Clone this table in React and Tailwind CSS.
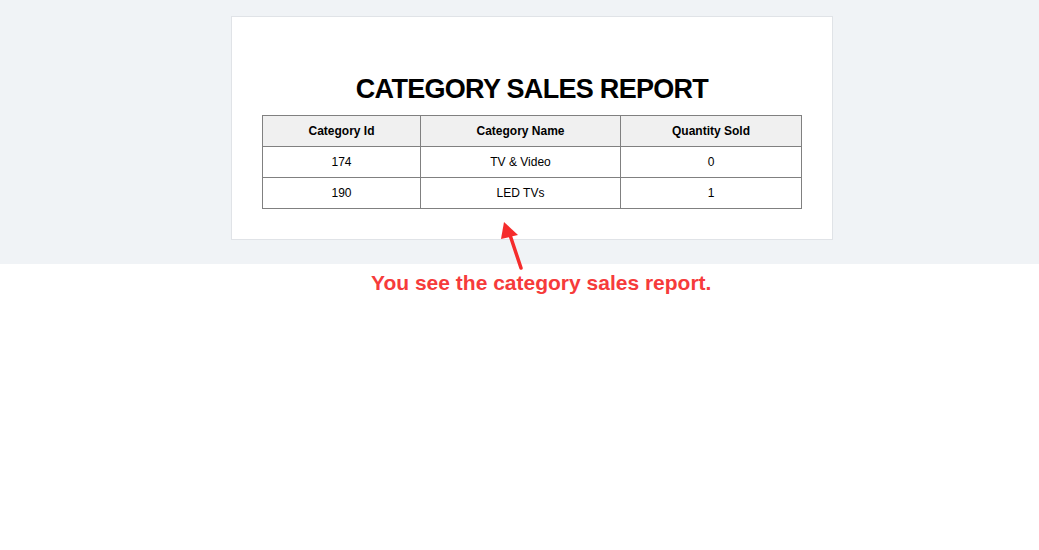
import React from 'react'

const rows = [
  { id: 174, name: 'TV & Video', qty: 0 },
  { id: 190, name: 'LED TVs', qty: 1 },
]

const cell = 'border border-[#808080] h-[31px] text-center align-middle'

export default function App() {
  return (
    <div className="relative w-[1039px] h-[550px] bg-white font-['Liberation_Sans',Arial,sans-serif]">
      <div className="bg-[#f0f3f6] h-[264px] pt-4">
        <div className="ml-[231px] w-[602px] h-[224px] bg-white border border-[#e0e3e7] px-[30px] pt-[56px]">
          <h1 className="text-[27px] leading-[32px] tracking-[-0.7px] font-bold text-black text-center mb-[10px]">
            CATEGORY SALES REPORT
          </h1>
          <table className="w-[540px] border-collapse text-[12px] text-black">
            <thead>
              <tr className="bg-[#f0f0f0] font-bold">
                <th className={`${cell} w-[158px]`}>Category Id</th>
                <th className={`${cell} w-[200px]`}>Category Name</th>
                <th className={cell}>Quantity Sold</th>
              </tr>
            </thead>
            <tbody>
              {rows.map((r) => (
                <tr key={r.id}>
                  <td className={cell}>{r.id}</td>
                  <td className={cell}>{r.name}</td>
                  <td className={cell}>{r.qty}</td>
                </tr>
              ))}
            </tbody>
          </table>
        </div>
      </div>

      <svg className="absolute left-[490px] top-[218px]" width="40" height="54" viewBox="0 0 40 54">
        <line x1="31" y1="50" x2="19" y2="14" stroke="#f52c2c" strokeWidth="3.5" strokeLinecap="round" />
        <polygon points="14,4 28,17 11,21" fill="#f52c2c" />
      </svg>

      <p className="absolute left-[371px] top-[269px] text-[21px] leading-[28px] font-bold text-[#f63b3b]">
        You see the category sales report.
      </p>
    </div>
  )
}
